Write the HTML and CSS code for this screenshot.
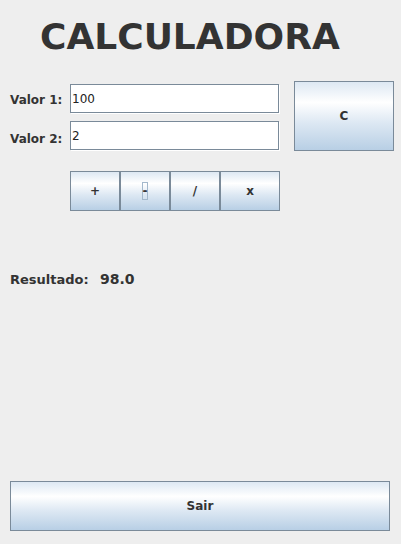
FILE: index.html
```html
<!DOCTYPE html>
<html>
<head>
<meta charset="utf-8">
<title>Calculadora</title>
<link rel="stylesheet" href="styles.css">
</head>
<body>
<div class="app">
  <h1 class="title">CALCULADORA</h1>
  <div class="form">
    <div class="fields">
      <div class="row"><label class="lbl">Valor 1:</label><input class="field" type="text" value="100"></div>
      <div class="row row2"><label class="lbl">Valor 2:</label><input class="field" type="text" value="2"></div>
    </div>
    <button class="btn btn-clear">C</button>
  </div>
  <div class="ops">
    <button class="btn op">+</button>
    <button class="btn op"><span class="focus">-</span></button>
    <button class="btn op">/</button>
    <button class="btn op op-wide">x</button>
  </div>
  <div class="result"><span class="result-label">Resultado:</span><span class="result-value">98.0</span></div>
  <button class="btn btn-exit">Sair</button>
</div>
</body>
</html>
```
FILE: styles.css
```css
html, body {
  margin: 0;
  background: #eeeeee;
}
.app {
  display: flex;
  flex-direction: column;
  height: 544px;
  box-sizing: border-box;
  padding: 19px 0 13px 0;
  font-family: "DejaVu Sans", sans-serif;
  color: #333333;
}
.title {
  margin: 0 0 0 40px;
  font-size: 36px;
  line-height: 36px;
  font-weight: bold;
}
.form {
  display: flex;
  align-items: flex-start;
  margin-top: 26px;
}
.fields {
  display: flex;
  flex-direction: column;
  gap: 8px;
  margin-top: 3px;
  padding-left: 10px;
}
.row {
  display: flex;
  align-items: flex-start;
}
.lbl {
  width: 60px;
  font-size: 12px;
  font-weight: bold;
  line-height: 14px;
  padding-top: 9px;
}
.row2 .lbl {
  padding-top: 11px;
}
.field {
  box-sizing: border-box;
  width: 209px;
  height: 29px;
  margin: 0;
  padding: 0 0 0 1px;
  border: 1px solid #7a8a99;
  box-shadow: 1px 1px 0 #ffffff;
  background: #ffffff;
  font: 12px "DejaVu Sans", sans-serif;
  color: #222222;
  outline: none;
}
.btn {
  box-sizing: border-box;
  display: flex;
  align-items: center;
  justify-content: center;
  margin: 0;
  padding: 0;
  border: 1px solid #7a8a99;
  background: linear-gradient(to bottom, #dde8f3 0%, #ffffff 30%, #dde8f3 60%, #b8cfe5 100%);
  font: bold 12px "DejaVu Sans", sans-serif;
  color: #333333;
}
.btn-clear {
  width: 100px;
  height: 70px;
  margin-left: 15px;
}
.ops {
  display: flex;
  margin: 20px 0 0 70px;
}
.op {
  width: 50px;
  height: 40px;
}
.op-wide {
  width: 60px;
}
.focus {
  display: inline-block;
  border: 1px solid #a3b8cc;
  padding: 1px 0;
  line-height: 14px;
}
.result {
  display: flex;
  align-items: baseline;
  margin: 60px 0 0 10px;
  line-height: 16px;
}
.result-label {
  width: 90px;
  font-size: 13px;
  font-weight: bold;
}
.result-value {
  font-size: 14px;
  font-weight: bold;
}
.btn-exit {
  width: 380px;
  height: 50px;
  margin: auto 0 0 10px;
}
```
